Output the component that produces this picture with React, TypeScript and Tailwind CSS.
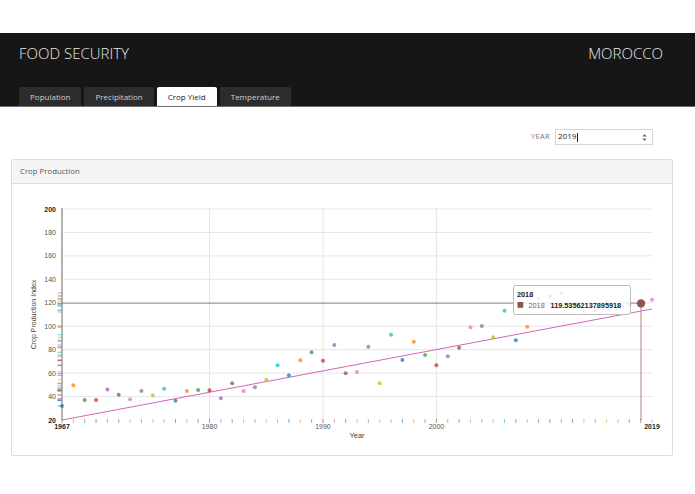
import React from "react";

const VALUES: number[] = [
  32, 49.6, 37, 37, 46, 41.6, 37.6, 44.7, 41, 46.7, 36.5, 44.7, 45.5, 45.3, 38.5, 51.3, 44.7, 47.9, 54.4, 66.7,
  58.1, 70.9, 77.8, 70.6, 84, 59.8, 61, 82.5, 51.3, 92.8, 71.2, 86.8, 75.5, 66.7, 74.3, 81.7, 99.1, 100.2, 90.5,
  113.3, 88, 99.6, 123.5, 125.8, 128.4, 118, 112, 113.8, 121, 117, 119, 119.5, 122.6,
];
const C10 = ["#1f77b4", "#ff7f0e", "#2ca02c", "#d62728", "#9467bd", "#8c564b", "#e377c2", "#7f7f7f", "#bcbd22", "#17becf"];
const X = (yr: number) => 62 + (yr - 1967) * (590 / 52);
const Y = (v: number) => 420 - (v - 20) * (211 / 180);
const colorOf = (i: number) => {
  const yr = 1967 + i;
  if (yr === 2018) return "#8c564b";
  if (yr === 2019) return "#e377c2";
  return C10[i % 10];
};

function Chart() {
  const yTicks = [20, 40, 60, 80, 100, 120, 140, 160, 180, 200];
  const xTicks = [1967, 1980, 1990, 2000, 2019];
  return (
    <svg width={660} height={270} className="block">
      <g transform="translate(-12,-184)" style={{ fontFamily: "'Liberation Sans', Arial, sans-serif" }}>
        {yTicks.slice(1).map((t) => (
          <line key={t} x1={62} x2={652} y1={Y(t)} y2={Y(t)} stroke="#e6e6e6" strokeWidth={1} />
        ))}
        {[1980, 1990, 2000].map((t) => (
          <line key={t} x1={X(t)} x2={X(t)} y1={208} y2={420} stroke="#e6e6e6" strokeWidth={1} />
        ))}
        {yTicks.map((t) => (
          <text
            key={t}
            x={56}
            y={Y(t) + 2.5}
            textAnchor="end"
            fontSize={7}
            fontWeight={t === 20 || t === 200 ? 700 : 400}
            fill={t === 20 || t === 200 ? "#222" : "#555"}
          >
            {t}
          </text>
        ))}
        {xTicks.map((t) => (
          <text
            key={t}
            x={X(t)}
            y={428.5}
            textAnchor="middle"
            fontSize={7}
            fontWeight={t === 1967 || t === 2019 ? 700 : 400}
            fill={t === 1967 || t === 2019 ? "#222" : "#555"}
          >
            {t}
          </text>
        ))}
        <text x={357} y={438} textAnchor="middle" fontSize={7.5} fill="#444">
          Year
        </text>
        <text transform="translate(36,314.5) rotate(-90)" textAnchor="middle" fontSize={7} fill="#444">
          Crop Production Index
        </text>
        {VALUES.map((v, i) => (
          <line key={"ry" + i} x1={57.5} x2={62} y1={Y(v)} y2={Y(v)} stroke={colorOf(i)} strokeOpacity={0.6} strokeWidth={1} />
        ))}
        {VALUES.map((_, i) => (
          <line key={"rx" + i} x1={X(1967 + i)} x2={X(1967 + i)} y1={419} y2={423} stroke={colorOf(i)} strokeOpacity={0.6} strokeWidth={1} />
        ))}
        <line x1={62} x2={62} y1={208} y2={420} stroke="#9a9a9a" strokeWidth={1.5} />
        <line x1={62} x2={641} y1={Y(119.5)} y2={Y(119.5)} stroke="#8c564b" strokeOpacity={0.5} strokeWidth={1.5} />
        <line x1={641} x2={641} y1={Y(119.5)} y2={420} stroke="#8c564b" strokeOpacity={0.6} strokeWidth={1.2} />
        <line x1={62} y1={420} x2={652} y2={309} stroke="#d665b7" strokeWidth={1} />
        {VALUES.map((v, i) =>
          1967 + i === 2018 ? null : (
            <circle key={"p" + i} cx={X(1967 + i)} cy={Y(v)} r={2} fill={colorOf(i)} fillOpacity={0.75} />
          )
        )}
        <circle cx={641} cy={Y(119.5)} r={4.2} fill="#8c564b" />
        <rect x={513.5} y={285.5} width={117} height={29} rx={2} fill="#ffffff" fillOpacity={0.85} stroke="#bdbdbd" strokeWidth={1} />
        <text x={517} y={296.5} fontSize={7.3} fontWeight={700} fill="#222">
          2018
        </text>
        <rect x={517.5} y={302} width={5.8} height={5.8} fill="#8c564b" />
        <text x={528.5} y={307.6} fontSize={7.3} fill="#666">
          2018
        </text>
        <text x={550.5} y={307.6} fontSize={7.3} fontWeight={700} fill="#222">
          119.53562137895918
        </text>
      </g>
    </svg>
  );
}

export default function App() {
  const tabs = ["Population", "Precipitation", "Crop Yield", "Temperature"];
  return (
    <div className="w-[695px] h-[494px] bg-white overflow-hidden" style={{ fontFamily: "'Open Sans', 'Liberation Sans', sans-serif" }}>
      <div className="h-[33px]" />
      <header className="h-[74px] bg-[#161616] border-b border-[#6e6e6e] flex flex-col">
        <div className="flex justify-between pl-[19px] pr-[32px] pt-[10px]">
          <div className="text-[15px] leading-[20px] font-light text-[#e8e8e8]">FOOD SECURITY</div>
          <div className="text-[15px] leading-[20px] font-light text-[#e8e8e8]">MOROCCO</div>
        </div>
        <div className="mt-auto flex gap-[3px] pl-[19px]">
          {tabs.map((t) => (
            <div
              key={t}
              className={
                t === "Crop Yield"
                  ? "h-[19px] px-[11px] pt-[1px] flex items-center text-[8px] font-normal bg-white text-[#222] rounded-t-[2px]"
                  : "h-[19px] px-[11px] pt-[1px] flex items-center text-[8px] font-normal bg-[#2c2c2c] text-[#cfcfcf] rounded-t-[2px]"
              }
            >
              {t}
            </div>
          ))}
        </div>
      </header>
      <div className="flex justify-end items-center pr-[42px] mt-[22px] gap-[5px]">
        <span className="text-[7.5px] text-[#777] tracking-[0.3px]">YEAR</span>
        <div className="w-[98px] h-[16px] border border-[#d6d6d6] flex items-center justify-between pl-[2px] pr-[5px]">
          <span className="text-[8px] text-[#222] leading-none">
            2019<span className="inline-block w-[1px] h-[9px] bg-[#222] align-middle ml-[0.5px]" />
          </span>
          <svg width="5" height="9" viewBox="0 0 5 9">
            <path d="M2.5 1 L4.5 3.5 H0.5 Z" fill="#666" />
            <path d="M2.5 8 L4.5 5.5 H0.5 Z" fill="#666" />
          </svg>
        </div>
      </div>
      <div className="ml-[11px] mt-[14px] w-[662px] h-[297px] border border-[#dddddd] rounded-[2px] flex flex-col">
        <div className="h-[24px] bg-[#f5f5f5] border-b border-[#dddddd] flex items-center pl-[8px] text-[7.8px] text-[#555]">
          Crop Production
        </div>
        <Chart />
      </div>
    </div>
  );
}
